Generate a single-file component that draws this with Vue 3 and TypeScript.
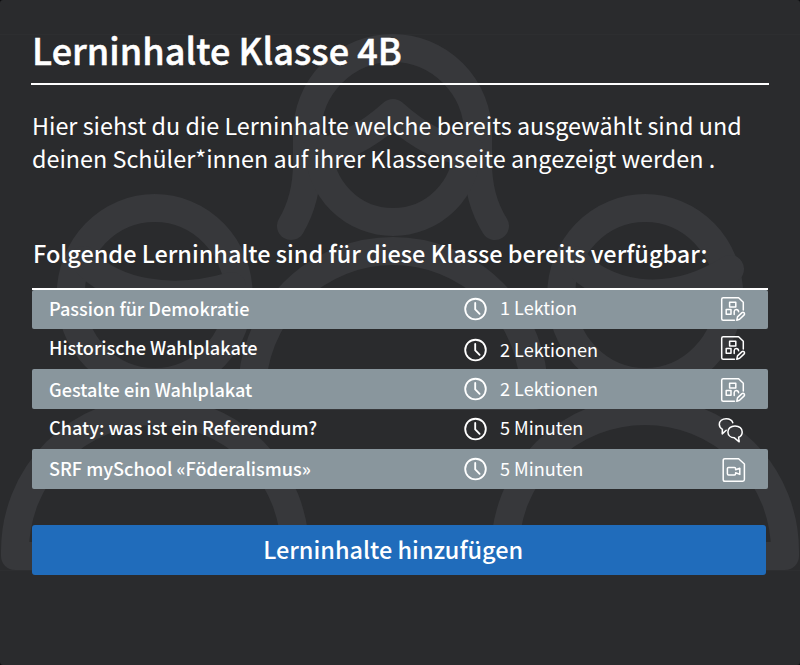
<script setup lang="ts">
type IconKind = 'worksheet' | 'chat' | 'video'

interface Lesson {
  title: string
  duration: string
  icon: IconKind
}

const lessons: Lesson[] = [
  { title: 'Passion für Demokratie', duration: '1 Lektion', icon: 'worksheet' },
  { title: 'Historische Wahlplakate', duration: '2 Lektionen', icon: 'worksheet' },
  { title: 'Gestalte ein Wahlplakat', duration: '2 Lektionen', icon: 'worksheet' },
  { title: 'Chaty: was ist ein Referendum?', duration: '5 Minuten', icon: 'chat' },
  { title: 'SRF mySchool «Föderalismus»', duration: '5 Minuten', icon: 'video' },
]
</script>

<template>
  <main class="card">
    <svg class="backdrop" viewBox="0 0 800 665" aria-hidden="true">
      <path class="edge" d="M0 34.5H800M0 570.5H800" />
      <g class="people">
        <path d="M291 226Q307 199 307 163V134A85.5 86 0 0 1 478 134V163Q478 199 495 226" />
        <path d="M319 148A74 74 0 0 0 467 148" />
        <path d="M314 152Q352 150 393 113Q434 150 472 152" />
        <path d="M252 396V392A141 141 0 0 1 534 392V396Z" />
        <ellipse cx="154.7" cy="295" rx="84" ry="87" />
        <path d="M84 260C112 293 172 304 232 286" />
        <path d="M15 556V551A140 140 0 0 1 295 551V556Z" />
        <ellipse cx="645.2" cy="295" rx="84" ry="87" />
        <path d="M574 260C602 294 666 310 730 269" />
        <path d="M505 556V551A140 140 0 0 1 785 551V556Z" />
      </g>
    </svg>

    <div class="content">
      <h1 class="title">Lerninhalte Klasse 4B</h1>
      <p class="intro">
        Hier siehst du die Lerninhalte welche bereits ausgewählt sind und<br />
        deinen Schüler*innen auf ihrer Klassenseite angezeigt werden .
      </p>
      <h2 class="subtitle">Folgende Lerninhalte sind für diese Klasse bereits verfügbar:</h2>

      <ul class="lessons">
        <li v-for="lesson in lessons" :key="lesson.title" class="lesson">
          <span class="name">{{ lesson.title }}</span>
          <svg class="clock" viewBox="0 0 24 24" aria-hidden="true">
            <circle cx="11.5" cy="12" r="10.3" />
            <path d="M11.2 6V12.4L15.6 16.8" />
          </svg>
          <span class="duration">{{ lesson.duration }}</span>
          <svg class="kind" :class="lesson.icon" viewBox="0 0 26 26" aria-hidden="true">
            <template v-if="lesson.icon === 'worksheet'">
              <path d="M14.5 24.3H3.2Q1.7 24.3 1.7 22.8V3.2Q1.7 1.7 3.2 1.7H18.6L23.3 6.2V14" />
              <path d="M9.6 6.2H15.8V11H9.6ZM6.2 13.6H11V18.2H6.2ZM14.2 18.6V15.5Q14.4 13.6 16.2 13.6Q18.4 13.6 18.6 15.8" />
              <path d="M16.8 24.2L17.5 20.9L22 16.6Q23.2 15.9 24.2 16.9Q25 17.9 24.2 18.9L19.6 23.3Z" />
            </template>
            <template v-else-if="lesson.icon === 'chat'">
              <path d="M14.8 5.8C14 3 11.4 1.7 8.2 1.7C4.2 1.7 1.3 4 1.3 7.3C1.3 9.6 2.4 11.2 4.4 12.4L4.2 16.9L8.2 13.2" />
              <path d="M17 8.9C21.4 8.9 24.2 11.6 24.2 14.9C24.2 17.4 22.8 19.3 20.6 20.3L21.2 24.8L16.4 20.8C12.6 20.7 9.9 18.2 9.9 14.9C9.9 11.6 12.8 8.9 17 8.9Z" />
            </template>
            <template v-else>
              <path d="M4.9 1.7H18.6L24.4 7V22.6Q24.4 24.3 22.7 24.3H4.9Q3.2 24.3 3.2 22.6V3.4Q3.2 1.7 4.9 1.7Z" />
              <path d="M8.4 10.4H14.4Q15.6 10.4 15.6 11.6V12.8L19.8 11.2V17.4L15.6 15.8V16.8Q15.6 18 14.4 18H8.6Q7.4 18 7.4 16.8V11.4Q7.4 10.4 8.4 10.4Z" />
            </template>
          </svg>
        </li>
      </ul>

      <button class="add" type="button">Lerninhalte hinzufügen</button>
    </div>
  </main>
</template>

<style>
body {
  background: #0c0c0e;
}
</style>

<style scoped>
.card {
  position: relative;
  height: 665px;
  overflow: hidden;
  border-radius: 3px;
  background: #2a2b2d;
  color: #fff;
  font-family: 'Noto Sans CJK SC', 'Noto Sans', sans-serif;
}

.backdrop {
  position: absolute;
  inset: 0;
  width: 800px;
  height: 665px;
}

.people {
  fill: none;
  stroke: #37383b;
  stroke-width: 28;
  stroke-linecap: round;
  stroke-linejoin: round;
}

.edge {
  stroke: #2d2e30;
}

.content {
  position: relative;
  display: flex;
  flex-direction: column;
  padding: 25px 31px 0;
}

.title {
  margin: 0;
  padding: 0 0 10px 1px;
  border-bottom: 2px solid #fff;
  font-size: 36px;
  font-weight: 500;
  letter-spacing: 0.05px;
  line-height: 48px;
  -webkit-text-stroke: 0.5px #fff;
}

.intro {
  margin: 24px 0 0 1px;
  font-size: 23.35px;
  line-height: 33px;
  white-space: nowrap;
}

.subtitle {
  margin: 62px 0 0 2px;
  font-size: 23.46px;
  font-weight: 500;
  line-height: 33px;
  white-space: nowrap;
}

.lessons {
  margin: 18px 1px 0;
  padding: 0;
  border-top: 2px solid #fff;
  list-style: none;
}

.lesson {
  display: grid;
  grid-template-columns: 416px 35px 220px 26px;
  align-items: start;
  box-sizing: border-box;
  height: 40px;
  padding-left: 17px;
  font-size: 18.1px;
  line-height: 40px;
}

.lesson:nth-child(odd) {
  border-radius: 2px;
  background: #89969d;
}

.lesson:first-child {
  height: 39px;
}

.name {
  font-weight: 500;
}

.clock,
.kind {
  fill: none;
  stroke: #fff;
  stroke-linecap: round;
  stroke-linejoin: round;
}

.clock {
  width: 24px;
  height: 24px;
  margin: 8px 0 0 -1px;
  stroke-width: 1.85;
}

.kind {
  width: 26px;
  height: 26px;
  margin-top: 8px;
  stroke-width: 1.5;
}

.kind.chat {
  margin-left: -2px;
}

.lesson:nth-child(5) .name {
  margin-top: -1px;
}

.lesson:nth-child(1) .name,
.lesson:nth-child(2) .name,
.lesson:nth-child(4) .name {
  margin-top: -2px;
}

.lesson:nth-child(1) .duration {
  margin-top: -3px;
}

.lesson:nth-child(4) .duration {
  margin-top: -2px;
}

.lesson:nth-child(3) .duration,
.lesson:nth-child(5) .duration {
  margin-top: -1px;
}

.lesson:nth-child(1) .clock {
  margin-top: 7px;
}

.lesson:nth-child(2) .clock {
  margin-top: 9px;
}

.lesson:nth-child(1) .kind,
.lesson:nth-child(2) .kind {
  margin-top: 6px;
}

.add {
  height: 50px;
  margin: 36px 3px 0 1.4px;
  padding: 0 12px 2px 0;
  border: 0;
  border-radius: 3px;
  background: #206cbb;
  color: #fff;
  font-family: inherit;
  font-size: 23.5px;
  font-weight: 500;
  line-height: 48px;
}
</style>
